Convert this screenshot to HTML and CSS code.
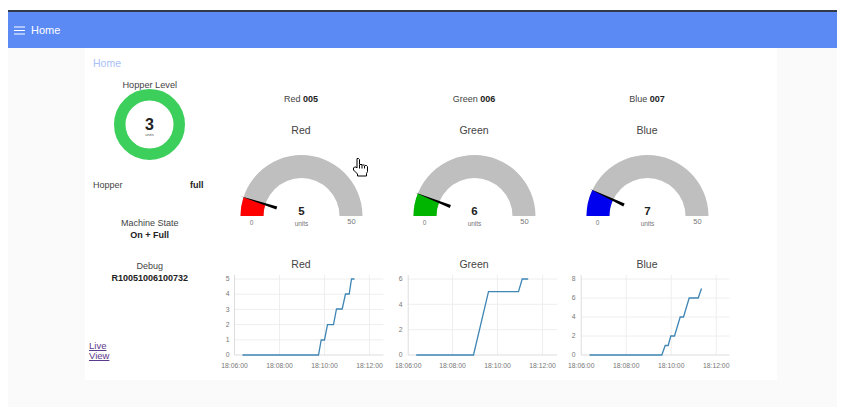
FILE: index.html
```html
<!DOCTYPE html>
<html lang="en">
<head>
    <meta charset="UTF-8">
    <meta name="viewport" content="width=device-width, initial-scale=1.0">
    <title>Home</title>
    <link rel="stylesheet" href="styles.css">
</head>
<body>
    <div class="frame">
        <header class="toolbar">
            <svg class="menu-icon" width="11" height="9" viewBox="0 0 11 9">
                <path d="M0 1h11M0 4.5h11M0 8h11" stroke="#fff" stroke-width="1.1" fill="none"/>
            </svg>
            <span>Home</span>
        </header>

        <main class="content">
            <div class="card">
                <h1 class="page-title">Home</h1>
                <div class="columns">
                    <section class="side">
                        <div class="side-label">Hopper Level</div>
                        <svg class="donut" width="71" height="71" viewBox="0 0 71 71">
                            <circle cx="35.5" cy="35.5" r="29.75" fill="none" stroke="#3ccf5c" stroke-width="11.5"/>
                            <text class="donut-value" x="35.5" y="40.5">3</text>
                            <text class="donut-units" x="35.5" y="47">units</text>
                        </svg>

                        <div class="hopper-row">
                            <span>Hopper</span>
                            <b>full</b>
                        </div>

                        <div class="state">
                            <div>Machine State</div>
                            <b>On + Full</b>
                        </div>

                        <div class="debug">
                            <div>Debug</div>
                            <b>R10051006100732</b>
                        </div>

                        <div class="links">
                            <a href="#">Live</a><br>
                            <a href="#">View</a>
                        </div>
                    </section>

                    <section class="dial">
                        <div class="reading">Red <b>005</b></div>
                        <div class="dial-title">Red</div>
                        <svg class="gauge" width="173" height="80" viewBox="-86.5 -66 173 80">
                            <path class="gauge-bg" d="M-61 0A61 61 0 0 1 61 0H38A38 38 0 0 0 -38 0Z"/>
                            <path d="M-61 0A61 61 0 0 1 -58 -18.85L-36.1 -11.74A38 38 0 0 0 -38 0Z" fill="#f00"/>
                            <polygon class="needle" transform="rotate(18)" points="-64,0 -26,-1.6 -26,1.6"/>
                            <text class="gauge-value" x="0" y="-1">5</text>
                            <text class="gauge-small" x="0" y="10">units</text>
                            <text class="gauge-small" x="-50" y="9">0</text>
                            <text class="gauge-end" x="50" y="8">50</text>
                        </svg>
                        <div class="chart-title">Red</div>
                        <svg class="chart" width="173" height="105" viewBox="214.5 270 173 105">
                            <path class="grid" d="M234 279H383M234 294.2H383M234 309.4H383M234 324.6H383M234 339.8H383M279 275V355M324 275V355M369 275V355"/>
                            <path class="axis" d="M234 275V355H383"/>
                            <text class="tick-y" x="229" y="281">5</text>
                            <text class="tick-y" x="229" y="296">4</text>
                            <text class="tick-y" x="229" y="311.500">3</text>
                            <text class="tick-y" x="229" y="327">2</text>
                            <text class="tick-y" x="229" y="342">1</text>
                            <text class="tick-y" x="229" y="357">0</text>
                            <text class="tick-x" x="234" y="368">18:06:00</text>
                            <text class="tick-x" x="279" y="368">18:08:00</text>
                            <text class="tick-x" x="324" y="368">18:10:00</text>
                            <text class="tick-x" x="369" y="368">18:12:00</text>
                            <path class="line" d="M242 355H318L320.700 340H324L327 324.700H333L336 309H341.700L345 294H348.700L351 279H354"/>
                        </svg>
                    </section>

                    <section class="dial">
                        <div class="reading">Green <b>006</b></div>
                        <div class="dial-title">Green</div>
                        <svg class="gauge" width="173" height="80" viewBox="-86.5 -66 173 80">
                            <path class="gauge-bg" d="M-61 0A61 61 0 0 1 61 0H38A38 38 0 0 0 -38 0Z"/>
                            <path d="M-61 0A61 61 0 0 1 -56.7 -22.46L-35.3 -13.99A38 38 0 0 0 -38 0Z" fill="#00b500"/>
                            <polygon class="needle" transform="rotate(21.6)" points="-64,0 -26,-1.6 -26,1.6"/>
                            <text class="gauge-value" x="0" y="-1">6</text>
                            <text class="gauge-small" x="0" y="10">units</text>
                            <text class="gauge-small" x="-50" y="9">0</text>
                            <text class="gauge-end" x="50" y="8">50</text>
                        </svg>
                        <div class="chart-title">Green</div>
                        <svg class="chart" width="173" height="105" viewBox="387.5 270 173 105">
                            <path class="grid" d="M407.700 279H556.700M407.700 304.300H556.700M407.700 329.700H556.700M452 275V355M497 275V355M542 275V355"/>
                            <path class="axis" d="M407.700 275V355H556.700"/>
                            <text class="tick-y" x="402" y="281">6</text>
                            <text class="tick-y" x="402" y="306.500">4</text>
                            <text class="tick-y" x="402" y="332">2</text>
                            <text class="tick-y" x="402" y="357">0</text>
                            <text class="tick-x" x="407.700" y="368">18:06:00</text>
                            <text class="tick-x" x="452" y="368">18:08:00</text>
                            <text class="tick-x" x="497" y="368">18:10:00</text>
                            <text class="tick-x" x="542" y="368">18:12:00</text>
                            <path class="line" d="M415.700 355H473L488 291.700H518L521.700 279H527.700"/>
                        </svg>
                    </section>

                    <section class="dial">
                        <div class="reading">Blue <b>007</b></div>
                        <div class="dial-title">Blue</div>
                        <svg class="gauge" width="173" height="80" viewBox="-86.5 -66 173 80">
                            <path class="gauge-bg" d="M-61 0A61 61 0 0 1 61 0H38A38 38 0 0 0 -38 0Z"/>
                            <path d="M-61 0A61 61 0 0 1 -55.2 -25.97L-34.4 -16.18A38 38 0 0 0 -38 0Z" fill="#00e"/>
                            <polygon class="needle" transform="rotate(25.2)" points="-64,0 -26,-1.6 -26,1.6"/>
                            <text class="gauge-value" x="0" y="-1">7</text>
                            <text class="gauge-small" x="0" y="10">units</text>
                            <text class="gauge-small" x="-50" y="9">0</text>
                            <text class="gauge-end" x="50" y="8">50</text>
                        </svg>
                        <div class="chart-title">Blue</div>
                        <svg class="chart" width="173" height="105" viewBox="560.5 270 173 105">
                            <path class="grid" d="M580.700 279H729M580.700 298H729M580.700 317H729M580.700 336H729M625.700 275V355M670.700 275V355M715.700 275V355"/>
                            <path class="axis" d="M580.700 275V355H729"/>
                            <text class="tick-y" x="575" y="281">8</text>
                            <text class="tick-y" x="575" y="300">6</text>
                            <text class="tick-y" x="575" y="319">4</text>
                            <text class="tick-y" x="575" y="338">2</text>
                            <text class="tick-y" x="575" y="357">0</text>
                            <text class="tick-x" x="580.700" y="368">18:06:00</text>
                            <text class="tick-x" x="625.700" y="368">18:08:00</text>
                            <text class="tick-x" x="670.700" y="368">18:10:00</text>
                            <text class="tick-x" x="715.700" y="368">18:12:00</text>
                            <path class="line" d="M589 355H661.300L664.700 345.500H667.700L670.300 336H674L679.700 317H683L688.700 298H697.700L701 288.500"/>
                        </svg>
                    </section>
                </div>

                <svg class="cursor" width="17" height="19" viewBox="0 0 17 19">
                    <path d="M5 .5h1.500l1 1v5h2.500l.5.5h2l.5.5h1.500l1 1v5l-1 2v2.500h-9v-2l-4-4v-2l1-1h1.500l1 1v-8z" fill="#fff" stroke="#000"/>
                    <path d="M7.500 7v3.500M10 7v3.500M12.500 8v2.500" stroke="#000" fill="none"/>
                </svg>
            </div>
        </main>
    </div>
</body>
</html>
```

FILE: styles.css
```css
body {
    margin: 0;
    padding: 10px 10px 8px 8px;
    background-color: #fff;
    font-family: "Liberation Sans", Arial, sans-serif;
    font-size: 9px;
    color: #444;
}

.frame {
    display: flex;
    flex-direction: column;
    height: 397px;
}

.toolbar {
    display: flex;
    align-items: center;
    gap: 6px;
    height: 36px;
    padding-left: 6px;
    background-color: #5b8af5;
    border-top: 2px solid #333a45;
    color: #fff;
    font-size: 11px;
}

.content {
    flex: 1;
    padding: 0 60px 27px 77px;
    background-color: #fafafa;
}

.card {
    position: relative;
    height: 332px;
    background-color: #fff;
}

.page-title {
    margin: 0;
    padding: 9px 0 0 8px;
    height: 13px;
    color: #a9c0f7;
    font-size: 10.500px;
    font-weight: normal;
    line-height: 12px;
}

.columns {
    display: flex;
    margin-top: 9px;
}

.side {
    display: flex;
    flex-direction: column;
    width: 129.500px;
    text-align: center;
}

.side-label {
    padding-top: 1px;
    margin-bottom: -1px;
    line-height: 10px;
    font-size: 9.200px;
}

.donut {
    align-self: center;
}

.donut-value {
    text-anchor: middle;
    font-size: 16px;
    font-weight: bold;
    fill: #222;
}

.donut-units {
    text-anchor: middle;
    font-size: 4px;
    fill: #555;
}

.hopper-row {
    display: flex;
    justify-content: space-between;
    margin-top: 19px;
    padding: 0 11px 0 8px;
    line-height: 12px;
}

.state {
    margin-top: 26px;
    line-height: 12px;
}

.debug {
    margin-top: 19px;
    line-height: 12px;
}

b {
    color: #222;
}

.links {
    margin-top: 57px;
    padding-left: 4px;
    text-align: left;
    font-size: 9.500px;
    line-height: 10px;
}

.links a {
    color: #5b3a8b;
}

.dial {
    display: flex;
    flex-direction: column;
    width: 173px;
    padding-top: 14px;
    text-align: center;
}

.reading {
    line-height: 12px;
}

.dial-title {
    margin-top: 19px;
    font-size: 10.500px;
    line-height: 12px;
}

.gauge {
    margin-top: 14px;
}

.gauge-bg {
    fill: #bfbfbf;
}

.needle {
    fill: #000;
}

.gauge-value {
    text-anchor: middle;
    font-size: 11.500px;
    font-weight: bold;
    fill: #222;
}

.gauge-small {
    text-anchor: middle;
    font-size: 6.500px;
    fill: #777;
}

.gauge-end {
    text-anchor: middle;
    font-size: 7.500px;
    fill: #777;
}

.chart-title {
    margin-top: 28px;
    font-size: 10.500px;
    line-height: 12px;
}

.grid {
    stroke: #eee;
    stroke-width: 1;
    fill: none;
}

.axis {
    stroke: #ddd;
    stroke-width: 1;
    fill: none;
}

.line {
    stroke: #3f86b5;
    stroke-width: 1.300;
    fill: none;
}

.tick-x,
.tick-y {
    font-size: 6.800px;
    fill: #777;
}

.tick-x {
    text-anchor: middle;
}

.tick-y {
    text-anchor: end;
}

.cursor {
    position: absolute;
    left: 267px;
    top: 110px;
}
```
